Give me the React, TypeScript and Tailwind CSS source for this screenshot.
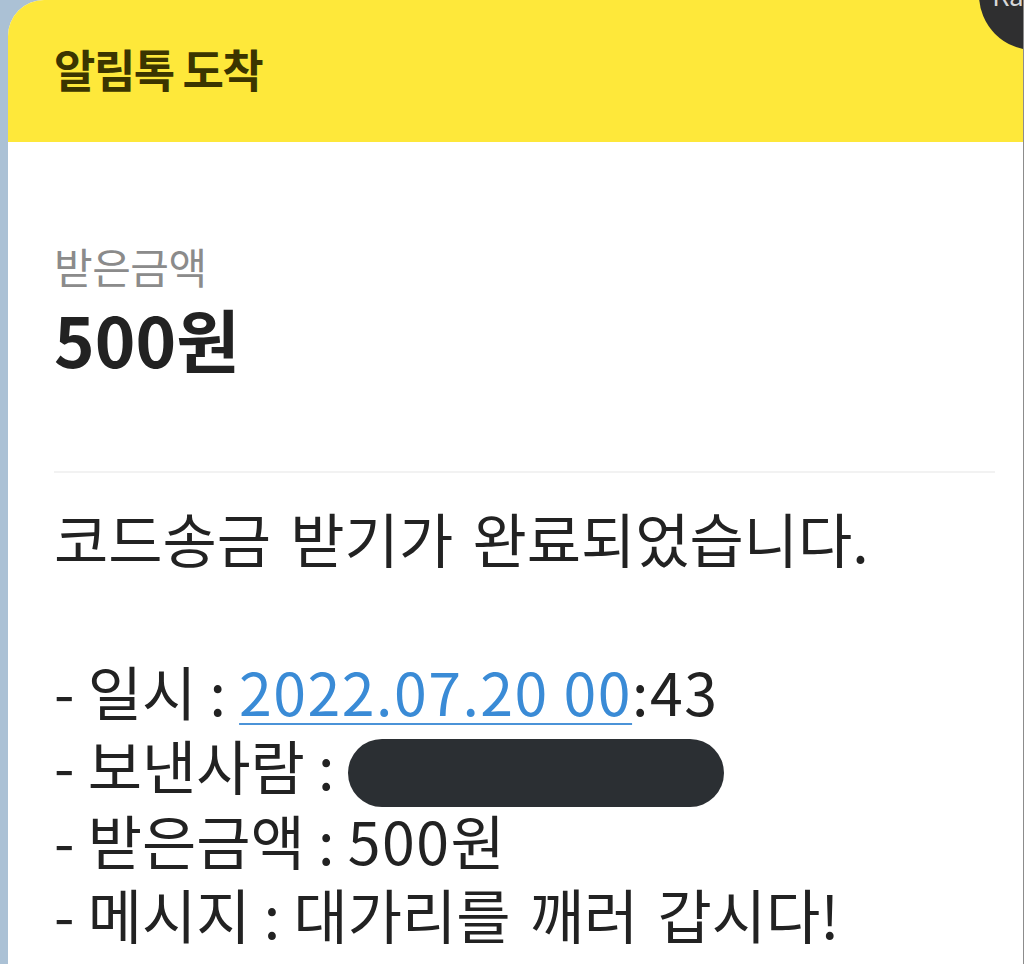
import React from "react";

const font = { fontFamily: '"Noto Sans CJK KR", "Noto Sans", sans-serif' };

export default function App() {
  return (
    <div
      className="h-[964px] overflow-hidden bg-[#abc1d5] pl-2 flex"
      style={font}
    >
      <div className="relative flex-1 bg-white rounded-tl-[36px] overflow-hidden border-r border-[#8c8c8c]">
        {/* profile badge peeking in from the corner */}
        <div className="absolute -top-[60px] right-[-66px] w-[110px] h-[110px] rounded-full bg-[#2f2f30] flex items-end justify-center pb-[42px]">
          <span className="text-[26px] leading-none text-[#d8d8d8] -translate-x-[26px]">Ka</span>
        </div>

        <div className="h-[142px] bg-[#fee83a] flex items-center pl-[46px]">
          <h1 className="text-[45px] font-bold text-[#3b3500] tracking-[-1.5px] -mt-1">
            알림톡 도착
          </h1>
        </div>

        <div className="pl-[46px] pr-[28px]">
          <div className="pt-[96px]">
            <p className="text-[42px] leading-[56px] text-[#8b8b8b] tracking-[-0.5px]">받은금액</p>
            <p className="mt-[6px] text-[69px] leading-[76px] font-bold text-[#222]">
              500원
            </p>
          </div>

          <div className="mt-[95px] h-[2px] bg-[#f2f2f2]" />

          <div className="pt-[28px] text-[59px] leading-[74.5px] text-[#222]">
            <p className="[word-spacing:6px]">코드송금 받기가 완료되었습니다.</p>
            <div className="h-[78px]" />
            <p>
              - 일시 :{" "}
              <span className="tracking-[1.5px] text-[#3a8bd6] underline decoration-2 underline-offset-[7px] decoration-[#4b93d8]">
                2022.07.20 00
              </span>
              <span className="tracking-[1.5px]">:43</span>
            </p>
            <p className="flex items-center">
              <span>- 보낸사람 :&nbsp;</span>
              <span className="inline-block w-[376px] h-[68px] rounded-full bg-[#2b2f33] translate-y-[8px]" />
            </p>
            <p>
              - 받은금액 : <span className="tracking-[1.5px]">500</span>원
            </p>
            <p>
              - 메시지 : <span className="[word-spacing:6px]">대가리를 깨러 갑시다!</span>
            </p>
            <p>
              - 보낸메시지 확인하기 : <span className="[word-spacing:6px]">카카오페이</span>
            </p>
          </div>
        </div>
      </div>
    </div>
  );
}
